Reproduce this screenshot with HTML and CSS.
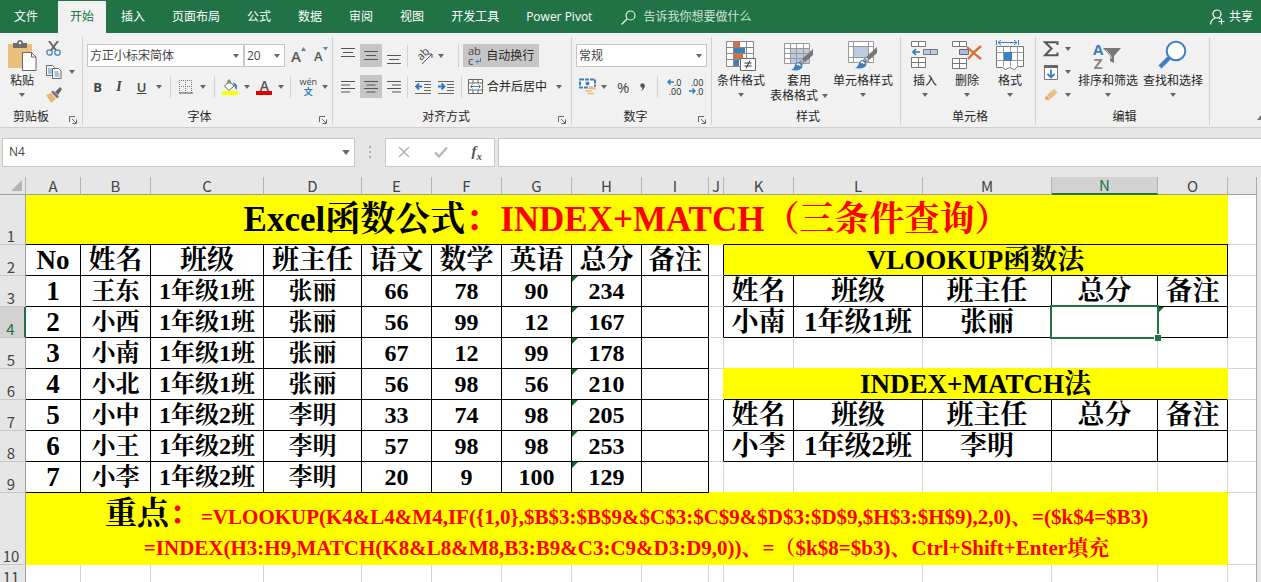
FILE: index.html
```html
<!DOCTYPE html>
<html lang="zh-CN">
<head>
<meta charset="utf-8">
<title>Excel</title>
<link rel="stylesheet" href="styles.css">
</head>
<body>
<svg class="defs" aria-hidden="true">
  <symbol id="arrow" viewBox="0 0 6 4"><path d="M0 0h6L3 4z" fill="#666"/></symbol>
  <symbol id="launch" viewBox="0 0 8 8"><path d="M.5 6V.5H6M3 3l4 4M7.500 3.500v4h-4" fill="none" stroke="#666"/></symbol>
  <symbol id="brush" viewBox="0 0 22 22"><path d="M22 0v6l-8 7-3-3z" fill="#777"/><path d="M10 10.500l3.500 3.500-2 2-3.500-3.500z" fill="#999"/><path d="M0 21c3-1 3-3 4-5 1-3 4-4 6-2s2 5-1 6.500c-3 1.500-6 1-9 .5z" fill="#3f7fbf"/><path d="M6 16c1-1.500 3-1 3 1" fill="none" stroke="#fff" stroke-width="1.500"/></symbol>
</svg>

<header class="tabs">
  <button class="tab file">文件</button>
  <button class="tab active">开始</button>
  <button class="tab">插入</button>
  <button class="tab">页面布局</button>
  <button class="tab">公式</button>
  <button class="tab">数据</button>
  <button class="tab">审阅</button>
  <button class="tab">视图</button>
  <button class="tab">开发工具</button>
  <button class="tab">Power Pivot</button>
  <button class="tab tell"><svg width="15" height="15" viewBox="0 0 15 15"><circle cx="9.500" cy="5.500" r="4.500" fill="none" stroke="#e6f0ea" stroke-width="1.200"/><path d="M6 9L.5 14.500" stroke="#e6f0ea" stroke-width="1.400"/></svg>告诉我你想要做什么</button>
  <button class="tab share"><svg width="15" height="16" viewBox="0 0 15 16" fill="none" stroke="#fff" stroke-width="1.200"><circle cx="7" cy="5" r="4"/><path d="M.6 15.500c0-4 2-5.500 4.500-6.500M9 9l1.500 1M11.500 9.500v6M8.500 12.500h6"/></svg>共享</button>
</header>

<section class="ribbon">
  <div class="group clipboard">
    <div class="tools">
      <button class="big paste"><svg width="29" height="32" viewBox="0 0 29 32"><path d="M0 4h24v24H0z" fill="#e9c07c"/><path d="M5 3h4c0-4 6-4 6 0h4v5H5z" fill="#6d6d6d"/><circle cx="12" cy="3" r="1.200" fill="#fff"/><path d="M14.500 12.500h9l4.500 4.500v13.500H14.500z" fill="#fff" stroke="#666"/><path d="M23.500 12.500V17H28" fill="none" stroke="#666"/></svg><span>粘贴</span><svg class="arrow"><use href="#arrow"/></svg></button>
      <div class="stack">
        <button class="icon" aria-label="剪切"><svg width="16" height="16" viewBox="0 0 16 16"><path d="M3 0l7.500 10M12 0L4.500 10" stroke="#666" stroke-width="2"/><circle cx="3.500" cy="11.500" r="2.700" fill="none" stroke="#4a86b8" stroke-width="1.300"/><circle cx="11.500" cy="11.500" r="2.700" fill="none" stroke="#4a86b8" stroke-width="1.300"/></svg></button>
        <button class="icon split" aria-label="复制"><svg width="16" height="16" viewBox="0 0 16 16" fill="#fff" stroke="#666"><path d="M.5 1.500h6l2 2v8h-8z"/><path d="M6.500 4.500h6l2.500 2.500v7.500H6.500z"/><path d="M2 5h4M2 7h4M2 9h4M8.500 8h4M8.500 10h5M8.500 12h5" stroke="#4a86b8"/></svg><svg class="arrow"><use href="#arrow"/></svg></button>
        <button class="icon" aria-label="格式刷"><svg width="16" height="16" viewBox="0 0 16 16"><path d="M0 8l5-2 5 6-5 4z" fill="#e9b970"/><path d="M5 5l2-1.500 6 6-2 2z" fill="#777"/><path d="M9 5l5-5 2 2-4 6z" fill="#666"/></svg></button>
      </div>
    </div>
    <div class="caption"><span>剪贴板</span><button class="launch" aria-label="剪贴板设置"><svg width="8" height="8"><use href="#launch"/></svg></button></div>
  </div>

  <div class="group font">
    <div class="tools rows">
      <div class="bar">
        <label class="combo family"><select aria-label="字体"><option>方正小标宋简体</option></select><svg class="arrow"><use href="#arrow"/></svg></label>
        <label class="combo size"><select aria-label="字号"><option>20</option></select><svg class="arrow"><use href="#arrow"/></svg></label>
        <button class="icon grow" aria-label="增大字号"><span class="glyph large">A</span><svg width="5" height="18" viewBox="0 0 5 18"><path d="M0 4l2.500-4L5 4z" fill="#4a86b8"/></svg></button>
        <button class="icon grow shrink" aria-label="减小字号"><span class="glyph">A</span><svg width="5" height="18" viewBox="0 0 5 18"><path d="M0 0h5L2.500 3.500z" fill="#4a86b8"/></svg></button>
      </div>
      <div class="bar">
        <button class="icon letter"><b>B</b></button>
        <button class="icon letter"><i>I</i></button>
        <button class="icon letter split"><u>U</u><svg class="arrow"><use href="#arrow"/></svg></button>
        <span class="rule"></span>
        <button class="icon split" aria-label="边框"><svg width="14" height="14" viewBox="0 0 14 14" fill="none" stroke="#777" stroke-dasharray="1 1"><path d="M0 .5h14M0 6.500h14M.5 0v13M6.500 0v13M12.500 0v13"/><path d="M0 13h14" stroke="#555" stroke-dasharray="none"/></svg><svg class="arrow"><use href="#arrow"/></svg></button>
        <span class="rule"></span>
        <button class="icon split bucket" aria-label="填充颜色"><svg width="16" height="16" viewBox="0 0 16 16"><path d="M2.500 7L7.500 2l4.500 5-5 4.500z" fill="#fff" stroke="#666"/><path d="M6 5V1.500Q7 0 8 1.500V5" fill="none" stroke="#666"/><path d="M11 3.500c4 1 5 4 3.500 7.500-1.500-1-1-3-2.500-4.500z" fill="#3f7fbf"/><path d="M0 12h16v4H0z" fill="#ff0"/></svg><svg class="arrow"><use href="#arrow"/></svg></button>
        <button class="icon split bucket" aria-label="字体颜色"><span class="ink">A</span><svg class="arrow"><use href="#arrow"/></svg></button>
        <span class="rule"></span>
        <button class="icon split phonetic" aria-label="拼音"><span class="pinyin"><span>wén</span><span>文</span></span><svg class="arrow"><use href="#arrow"/></svg></button>
      </div>
    </div>
    <div class="caption"><span>字体</span><button class="launch" aria-label="字体设置"><svg width="8" height="8"><use href="#launch"/></svg></button></div>
  </div>

  <div class="group align">
    <div class="tools rows">
      <div class="bar">
        <button class="icon sq" aria-label="顶端对齐"><svg width="14" height="16" viewBox="0 0 14 16" stroke="#555"><path d="M0 .5h14M2 4.500h10M0 8.500h14" /></svg></button>
        <button class="icon sq on" aria-label="垂直居中"><svg width="14" height="16" viewBox="0 0 14 16" stroke="#555"><path d="M0 3.500h14M2 7.500h10M0 11.500h14"/></svg></button>
        <button class="icon sq" aria-label="底端对齐"><svg width="14" height="16" viewBox="0 0 14 16" stroke="#555"><path d="M0 7.500h14M2 11.500h10M0 15.500h14"/></svg></button>
        <span class="rule near"></span>
        <button class="icon split orient" aria-label="方向"><svg width="20" height="20" viewBox="0 0 20 20"><text x="7" y="15" transform="rotate(-45 7 15)" class="rot">ab</text><path d="M8 18L18 8M18 8h-4M18 8v4" stroke="#555" fill="none"/></svg><svg class="arrow"><use href="#arrow"/></svg></button>
        <span class="rule wrap-rule"></span>
        <button class="icon wrap on"><span class="abc"><span>ab</span><span>c<svg width="6" height="6" viewBox="0 0 6 6"><path d="M5.500 0v3.500H1M3 1.500L1 3.500l2 2" fill="none" stroke="#3f7fbf"/></svg></span></span>自动换行</button>
      </div>
      <div class="bar">
        <button class="icon sq" aria-label="左对齐"><svg width="14" height="12" viewBox="0 0 14 12" stroke="#555"><path d="M0 .5h14M0 4h9M0 7.500h14M0 11h9"/></svg></button>
        <button class="icon sq on" aria-label="居中"><svg width="14" height="12" viewBox="0 0 14 12" stroke="#555"><path d="M0 .5h14M2.500 4h9M0 7.500h14M2.500 11h9"/></svg></button>
        <button class="icon sq" aria-label="右对齐"><svg width="14" height="12" viewBox="0 0 14 12" stroke="#555"><path d="M0 .5h14M5 4h9M0 7.500h14M5 11h9"/></svg></button>
        <span class="rule near"></span>
        <button class="icon sq" aria-label="减少缩进"><svg width="16" height="14" viewBox="0 0 16 14"><path d="M0 1.500h16M9 4.500h7M9 7.500h7M9 10.500h7M0 13.500h16" stroke="#666"/><path d="M7 6.500H1M4 3.500l-3 3 3 3" fill="none" stroke="#2f79b9" stroke-width="1.800"/></svg></button>
        <button class="icon sq" aria-label="增加缩进"><svg width="16" height="14" viewBox="0 0 16 14"><path d="M0 1.500h16M9 4.500h7M9 7.500h7M9 10.500h7M0 13.500h16" stroke="#666"/><path d="M0 6.500h6M3.500 3.500l3 3-3 3" fill="none" stroke="#2f79b9" stroke-width="1.800"/></svg></button>
        <span class="rule merge-rule"></span>
        <button class="icon merge"><svg width="15" height="15" viewBox="0 0 15 15"><path d="M.5 .5h14v14H.5zM.5 4h14M.5 11h14M5 .5V4M10 .5V4M5 11v3.500M10 11v3.500" fill="#fff" stroke="#666"/><path d="M2.500 7.500h10M4.500 5.500l-2 2 2 2M10.500 5.500l2 2-2 2" fill="none" stroke="#3f7fbf"/></svg><span>合并后居中</span><svg class="arrow"><use href="#arrow"/></svg></button>
      </div>
    </div>
    <div class="caption"><span>对齐方式</span><button class="launch" aria-label="对齐设置"><svg width="8" height="8"><use href="#launch"/></svg></button></div>
  </div>

  <div class="group number">
    <div class="tools rows">
      <div class="bar">
        <label class="combo format"><select aria-label="数字格式"><option>常规</option></select><svg class="arrow"><use href="#arrow"/></svg></label>
      </div>
      <div class="bar">
        <button class="icon split money" aria-label="货币"><svg width="17" height="17" viewBox="0 0 17 17"><path d="M1 1.500h15v8H1z" fill="#fff" stroke="#3f7fbf" stroke-width="2" stroke-dasharray="4 1"/><circle cx="8.500" cy="5.500" r="2" fill="#3f7fbf"/><path d="M9 9h8v2.500H9zM6 12h7v2H6zM8 14.500h7v2H8z" fill="#ecb56d" stroke="#f1f1f1" stroke-width=".5"/></svg><svg class="arrow"><use href="#arrow"/></svg></button>
        <button class="icon pct">%</button>
        <button class="icon comma" aria-label="千位分隔"><svg width="5" height="8" viewBox="0 0 5 8"><circle cx="2.500" cy="2.500" r="2.200" fill="#555"/><path d="M4.700 2.500C4.700 5 3.500 7 1 8c1-1.500 1.500-2.500 1.500-4z" fill="#555"/></svg></button>
        <span class="rule"></span>
        <button class="icon dec"><span><svg width="7" height="6" viewBox="0 0 7 6"><path d="M7 3H1M3.500 .5L1 3l2.500 2.500" fill="none" stroke="#2f79b9" stroke-width="1.400"/></svg>.0</span><span>.00</span></button>
        <button class="icon dec"><span>.00</span><span><svg width="7" height="6" viewBox="0 0 7 6"><path d="M0 3h6M3.500 .5L6 3 3.500 5.500" fill="none" stroke="#2f79b9" stroke-width="1.400"/></svg>.0</span></button>
      </div>
    </div>
    <div class="caption"><span>数字</span><button class="launch" aria-label="数字设置"><svg width="8" height="8"><use href="#launch"/></svg></button></div>
  </div>

  <div class="group styles">
    <div class="tools">
      <button class="big"><svg width="30" height="32" viewBox="0 0 30 32"><path d="M.5 1.500h27v25H.5z" fill="#fff"/><path d="M8 2h6v5H8zM8 14h9v5H8z" fill="#d5703c"/><path d="M8 8h11v5H8zM8 20h5v6H8z" fill="#3f7fbf"/><path d="M.5 1.500h27v25H.5zM.5 7.500h27M.5 13.500h27M.5 19.500h27M7.500 1.500v25M20.500 1.500v25" fill="none" stroke="#888"/><path d="M14.500 18.500h15v12h-15z" fill="#fff" stroke="#666"/><path d="M18.500 23h7M18.500 26h7M24 20.500l-4 8" stroke="#333"/></svg><span>条件格式</span><svg class="arrow"><use href="#arrow"/></svg></button>
      <button class="big two"><svg width="30" height="32" viewBox="0 0 30 32"><path d="M.5 3.500h25v20H.5z" fill="#fff"/><path d="M7 9h18v14H7z" fill="#bccbe0"/><path d="M.5 3.500h25v20H.5zM.5 8.500h25M.5 13.500h25M.5 18.500h25M6.500 3.500v20M12.500 3.500v20M19.500 3.500v20" fill="none" stroke="#999"/><use href="#brush" x="7" y="9" width="22" height="22"/></svg><span>套用</span><span class="line">表格格式<svg class="arrow"><use href="#arrow"/></svg></span></button>
      <button class="big"><svg width="30" height="32" viewBox="0 0 30 32"><path d="M.5 1.500h25v21H.5z" fill="#fff"/><path d="M6 7h15v10H6z" fill="#bccbe0"/><path d="M.5 1.500h25v21H.5zM.5 6.500h25M.5 17.500h25M5.500 1.500v21M20.500 1.500v21" fill="none" stroke="#999"/><use href="#brush" x="7" y="7" width="22" height="22"/></svg><span>单元格样式</span><svg class="arrow"><use href="#arrow"/></svg></button>
    </div>
    <div class="caption"><span>样式</span></div>
  </div>

  <div class="group cells">
    <div class="tools">
      <button class="big"><svg width="28" height="32" viewBox="0 0 28 32"><path d="M.5 1.500h14v5H.5zM7.500 1.500v5M.5 17.500h14v10H.5zM7.500 17.500v10M.5 22.500h14" fill="#fff" stroke="#777"/><path d="M12.500 9.500h14v5h-14zM19.500 9.500v5" fill="#bccbe0" stroke="#777"/><path d="M9 12H2M5 9l-3 3 3 3" fill="none" stroke="#2f79b9" stroke-width="1.700"/></svg><span>插入</span><svg class="arrow"><use href="#arrow"/></svg></button>
      <button class="big"><svg width="30" height="32" viewBox="0 0 30 32"><path d="M.5 1.500h14v5H.5zM7.500 1.500v5M.5 18.500h14v10H.5zM7.500 18.500v10M.5 23.500h14" fill="#fff" stroke="#777"/><path d="M7.500 9.500h9v5h-9z" fill="#a9bddb" stroke="#667"/><path d="M15 7c4 4 9 8 14 12M29 6c-5 4-9 8-13 13" fill="none" stroke="#d5703c" stroke-width="2.400"/></svg><span>删除</span><svg class="arrow"><use href="#arrow"/></svg></button>
      <button class="big"><svg width="30" height="32" viewBox="0 0 30 32"><path d="M1.500 0v5M23.500 0v5M3 2.500h19M6 0L3 2.500 6 5M19 0l3 2.500L19 5" fill="none" stroke="#3f7fbf"/><path d="M1.500 6.500h27v20l-6 0-3 3-5-2-4 2-3-2H1.500z" fill="#fff" stroke="#777"/><path d="M1.500 12.500h27M1.500 20.500h27M8.500 6.500v20M15.500 6.500v20M22.500 6.500v20" fill="none" stroke="#999"/><path d="M9 12h8v9H9z" fill="#3f7fbf"/></svg><span>格式</span><svg class="arrow"><use href="#arrow"/></svg></button>
    </div>
    <div class="caption"><span>单元格</span></div>
  </div>

  <div class="group edit">
    <div class="tools">
      <div class="stack">
        <button class="icon split" aria-label="求和"><svg width="16" height="16" viewBox="0 0 16 16"><path d="M14.500 4V1.200H2l6.500 6.300L2 14.300h12.500V11.500" fill="none" stroke="#555" stroke-width="2"/></svg><svg class="arrow"><use href="#arrow"/></svg></button>
        <button class="icon split" aria-label="填充"><svg width="16" height="16" viewBox="0 0 16 16"><path d="M1.500 1.500h13v14h-13z" fill="#fff" stroke="#777"/><path d="M1 1h14v3H1z" fill="#666"/><path d="M8 5.500v8M4.500 10L8 13.500l3.500-3.500" fill="none" stroke="#3f7fbf" stroke-width="1.800"/></svg><svg class="arrow"><use href="#arrow"/></svg></button>
        <button class="icon split" aria-label="清除"><svg width="16" height="16" viewBox="0 0 16 16"><path d="M4 8l7-6 3.500 3.500-7 6.500z" fill="#e9c07c"/><path d="M3.500 8.500L7 12l-2 1.500-3.500-1.500z" fill="#efa56b"/></svg><svg class="arrow"><use href="#arrow"/></svg></button>
      </div>
      <button class="big"><span class="sort"><span class="az"><b>A</b><b>Z</b></span><svg width="18" height="18" viewBox="0 0 18 18"><path d="M0 1h18l-7 8v7l-4-2V9z" fill="#777"/><path d="M3 3l5 6v3" fill="none" stroke="#ddd"/></svg></span><span>排序和筛选</span><svg class="arrow"><use href="#arrow"/></svg></button>
      <button class="big"><svg width="30" height="32" viewBox="0 0 30 32"><path d="M11 18L2 27" stroke="#3f7fbf" stroke-width="4.500"/><circle cx="18" cy="11" r="9.300" fill="#fff" stroke="#3f7fbf" stroke-width="2"/></svg><span>查找和选择</span><svg class="arrow"><use href="#arrow"/></svg></button>
    </div>
    <div class="caption"><span>编辑</span></div>
  </div>
  <button class="collapse" aria-label="折叠功能区"><svg width="8" height="5" viewBox="0 0 8 5"><path d="M0 5l4-5 4 5z" fill="#777"/></svg></button>
</section>

<section class="formula">
  <label class="namebox"><input aria-label="名称框" value="N4"><svg class="arrow wide"><use href="#arrow"/></svg></label>
  <span class="dots"><i></i><i></i><i></i></span>
  <div class="fx">
    <button aria-label="取消"><svg width="12" height="12" viewBox="0 0 12 12"><path d="M1 1l10 10M11 1L1 11" stroke="#b5b5b5" stroke-width="1.500"/></svg></button>
    <button aria-label="输入"><svg width="14" height="12" viewBox="0 0 14 12"><path d="M1 6.500L5 10.500 13 1.500" fill="none" stroke="#b5b5b5" stroke-width="2.200"/></svg></button>
    <button class="fn"><i>f</i><sub>x</sub></button>
  </div>
  <input class="entry" aria-label="编辑栏">
</section>

<main class="sheet">
<table class="cellsgrid">
  <colgroup><col class="c-head"><col class="c-a"><col class="c-s"><col class="c-c"><col class="c-d"><col class="c-s"><col class="c-s"><col class="c-s"><col class="c-s"><col class="c-i"><col class="c-j"><col class="c-s"><col class="c-l"><col class="c-l"><col class="c-n"><col class="c-s"><col></colgroup>
  <thead>
    <tr><th class="corner"><svg width="11" height="11" viewBox="0 0 11 11"><path d="M11 0v11H0z" fill="#b3b3b3"/></svg></th><th>A</th><th>B</th><th>C</th><th>D</th><th>E</th><th>F</th><th>G</th><th>H</th><th>I</th><th>J</th><th>K</th><th>L</th><th>M</th><th class="sel">N</th><th>O</th><th></th></tr>
  </thead>
  <tbody>
    <tr class="r1"><th>1</th><td colspan="15" class="y title">Excel函数公式<span class="red">：INDEX+MATCH（三条件查询）</span></td><td></td></tr>
    <tr class="r2"><th>2</th><td class="k h">No</td><td class="k h">姓名</td><td class="k h">班级</td><td class="k h">班主任</td><td class="k h">语文</td><td class="k h">数学</td><td class="k h">英语</td><td class="k h">总分</td><td class="k h">备注</td><td class="edge ytop"></td><td colspan="5" class="k y h">VLOOKUP函数法</td><td class="gtop"></td></tr>
    <tr><th>3</th><td class="k h">1</td><td class="k">王东</td><td class="k">1年级1班</td><td class="k">张丽</td><td class="k">66</td><td class="k">78</td><td class="k">90</td><td class="k flag">234</td><td class="k"></td><td class="edge"></td><td class="k h">姓名</td><td class="k h">班级</td><td class="k h">班主任</td><td class="k h">总分</td><td class="k h">备注</td><td></td></tr>
    <tr><th class="sel">4</th><td class="k h">2</td><td class="k">小西</td><td class="k">1年级1班</td><td class="k">张丽</td><td class="k">56</td><td class="k">99</td><td class="k">12</td><td class="k flag">167</td><td class="k"></td><td class="edge"></td><td class="k h">小南</td><td class="k h">1年级1班</td><td class="k h">张丽</td><td class="k cursor"></td><td class="k flag"></td><td></td></tr>
    <tr><th>5</th><td class="k h">3</td><td class="k">小南</td><td class="k">1年级1班</td><td class="k">张丽</td><td class="k">67</td><td class="k">12</td><td class="k">99</td><td class="k flag">178</td><td class="k"></td><td></td><td class="ybot"></td><td class="ybot"></td><td class="ybot"></td><td class="ybot"></td><td class="ybot"></td><td></td></tr>
    <tr><th>6</th><td class="k h">4</td><td class="k">小北</td><td class="k">1年级1班</td><td class="k">张丽</td><td class="k">56</td><td class="k">98</td><td class="k">56</td><td class="k flag">210</td><td class="k"></td><td class="yedge"></td><td colspan="5" class="k y h open">INDEX+MATCH法</td><td></td></tr>
    <tr><th>7</th><td class="k h">5</td><td class="k">小中</td><td class="k">1年级2班</td><td class="k">李明</td><td class="k">33</td><td class="k">74</td><td class="k">98</td><td class="k flag">205</td><td class="k"></td><td class="edge"></td><td class="k h">姓名</td><td class="k h">班级</td><td class="k h">班主任</td><td class="k h">总分</td><td class="k h">备注</td><td></td></tr>
    <tr><th>8</th><td class="k h">6</td><td class="k">小王</td><td class="k">1年级2班</td><td class="k">李明</td><td class="k">57</td><td class="k">98</td><td class="k">98</td><td class="k flag">253</td><td class="k"></td><td class="edge"></td><td class="k h">小李</td><td class="k h">1年级2班</td><td class="k h">李明</td><td class="k"></td><td class="k"></td><td></td></tr>
    <tr><th>9</th><td class="k h">7</td><td class="k">小李</td><td class="k">1年级2班</td><td class="k">李明</td><td class="k">20</td><td class="k">9</td><td class="k">100</td><td class="k flag">129</td><td class="k"></td><td class="ybot"></td><td class="ybot"></td><td class="ybot"></td><td class="ybot"></td><td class="ybot"></td><td class="ybot"></td><td></td></tr>
    <tr class="r10"><th>10</th><td colspan="15" class="y note"><div><span class="key">重点</span><span class="key red">：</span><span class="red">=VLOOKUP(K4&amp;L4&amp;M4,IF({1,0},$B$3:$B$9&amp;$C$3:$C$9&amp;$D$3:$D$9,$H$3:$H$9),2,0)、=($k$4=$B3)</span></div><div class="red">=INDEX(H3:H9,MATCH(K8&amp;L8&amp;M8,B3:B9&amp;C3:C9&amp;D3:D9,0))、=（$k$8=$b3)、Ctrl+Shift+Enter填充</div></td><td></td></tr>
    <tr class="r11"><th>11</th><td></td><td></td><td></td><td></td><td></td><td></td><td></td><td></td><td></td><td></td><td></td><td></td><td></td><td></td><td></td><td></td></tr>
  </tbody>
</table>
<div class="scroll"></div>
</main>
</body>
</html>
```
FILE: styles.css
```css
* { box-sizing: border-box; }
body {
  margin: 0;
  height: 100vh;
  display: flex;
  flex-direction: column;
  overflow: hidden;
  background: #e6e6e6;
  color: #262626;
  font: 12px/16px "Open Sans", "Noto Sans CJK SC", sans-serif;
}
button, input, select { font: inherit; color: inherit; }
button { background: none; border: 0; padding: 0; white-space: nowrap; }
svg { display: block; flex: none; }
.defs { position: absolute; width: 0; height: 0; }
.arrow { width: 6px; height: 4px; }
.arrow.wide { width: 8px; height: 5px; }

/* Tab strip */
.tabs { flex: none; display: flex; gap: 1px; height: 33px; padding-top: 1px; background: #217346; }
.tab { padding: 0 13px; color: #fff; display: flex; align-items: center; }
.tab.file { padding: 0 19px 0 14px; }
.tab.active { padding: 0 12px; margin-right: 1px; background: #f1f1f1; color: #217346; }
.tab.tell { gap: 7px; padding-left: 15px; color: #cfe3d7; }
.tab.share { gap: 4px; margin-left: auto; padding: 0 8px; }

/* Ribbon */
.ribbon { flex: none; display: flex; height: 95px; padding: 4px 0 2px; background: #f1f1f1; border-bottom: 1px solid #cfcfcf; }
.group { flex: none; display: flex; flex-direction: column; justify-content: space-between; border-right: 1px solid #d2d2d2; padding-left: 4px; }
.clipboard { width: 83px; }
.font { width: 250px; }
.align { width: 239px; }
.number { width: 140px; }
.styles { width: 189px; }
.cells { width: 135px; }
.edit { width: 174px; }
.tools { display: flex; }
.caption { display: flex; align-items: center; height: 16px; }
.caption span { flex: 1; text-align: center; }
.clipboard .caption span { padding-right: 8px; }
.font .caption span { padding-right: 4px; }
.launch { width: 16px; height: 16px; padding: 6px 3px 0; }
.rows { flex-direction: column; gap: 8px; padding-top: 7px; }
.bar { display: flex; align-items: center; height: 23px; }
.rule { width: 1px; height: 22px; background: #d2d2d2; margin: 0 4px; }
.rule.near { margin: 0 4px 0 2px; }
.wrap-rule { margin: 0 4px 0 12px; }
.merge-rule { margin: 0 6px 0 4px; }
.icon { display: flex; align-items: center; justify-content: center; height: 23px; padding: 0 4px; }
.split { gap: 7px; }
.sq { width: 22px; padding: 0; }
.sq + .sq { margin-left: 1px; }
.on { background: #c6c6c6; }
.stack { display: flex; flex-direction: column; align-items: flex-start; }
.clipboard .stack { padding-left: 2px; }
.big { display: flex; flex-direction: column; align-items: center; padding-top: 3px; }
.big > span { margin-top: 1px; }
.big > .sort { margin-top: 0; }
.big .arrow { margin-top: 4px; }
.big .line { display: flex; align-items: center; gap: 4px; height: 14px; margin-top: 0; }
.big .line .arrow { margin: 0; }
.paste { width: 36px; }
.combo, .namebox { display: grid; align-items: center; background: #fff; border: 1px solid #c6c6c6; height: 23px; }
.combo > *, .namebox > * { grid-area: 1 / 1; }
.combo .arrow, .namebox .arrow { justify-self: end; margin-right: 4px; }
.combo select { appearance: none; border: 0; background: none; width: 100%; padding: 0 2px; outline: 0; color: #444; }
.family { width: 157px; }
.size { width: 41px; }
.format { width: 131px; }
.grow { gap: 0; padding: 0 0 0 6px; }
.shrink { padding-left: 8px; }
.glyph { font-weight: 600; font-size: 13px; color: #555; }
.glyph.large { font-size: 15px; }
.letter { width: 22px; color: #444; font-size: 13px; }
.letter.split { width: 34px; gap: 9px; font-weight: 600; padding: 0 0 0 6px; margin-right: 3px; }
.letter i { font-family: "Liberation Serif", serif; font-weight: bold; font-size: 14px; }
.bucket { padding: 0 2px 0 4px; gap: 6px; }
.ink { width: 16px; height: 16px; border-bottom: 4px solid #e60000; font-size: 14px; line-height: 13px; font-weight: 600; color: #555; }
.phonetic { gap: 5px; }
.pinyin { display: flex; flex-direction: column; font-size: 9px; line-height: 10px; color: #444; }
.pinyin span + span { color: #2f79b9; font-weight: bold; }
.rot { font-size: 11px; fill: #444; }
.orient { gap: 4px; padding: 0 2px; }
.wrap { gap: 5px; padding: 0 5px; }
.abc { display: flex; flex-direction: column; font-size: 11px; line-height: 10px; color: #444; align-items: flex-start; }
.abc span { display: flex; align-items: center; gap: 2px; }
.merge { gap: 4px; padding: 0; }
.merge .arrow { margin-left: 5px; }
.money { padding: 0 4px 0 3px; gap: 5px; }
.pct { font-size: 15px; color: #444; padding: 0 6px; }
.comma { padding: 0 8px 0 5px; }
.dec { flex-direction: column; align-items: flex-end; font-size: 9px; line-height: 9px; width: 22px; padding: 0 3px; }
.dec span { display: flex; align-items: center; }
.cells .tools { padding-left: 6px; gap: 13px; }
.styles .tools { padding-left: 1px; gap: 5px; }
.edit .stack .icon { padding: 0 3px 0 3px; gap: 6px; }
.edit .tools { gap: 5px; }
.edit .stack + .big { margin-left: -1px; }
.sort { display: flex; align-items: center; width: 30px; height: 32px; }
.az { display: flex; flex-direction: column; font-size: 15px; line-height: 14px; color: #3f7fbf; }
.az b + b { color: #888; }
.collapse { margin: 0 -4px 5px auto; align-self: flex-end; }

/* Formula bar */
.formula { flex: none; display: flex; align-items: center; height: 49px; padding: 0 0 1px 2px; }
.namebox { width: 353px; height: 29px; }
.namebox input { border: 0; background: none; width: 100%; padding: 0 6px; outline: 0; color: #444; }
.dots { width: 30px; display: flex; flex-direction: column; align-items: center; gap: 3px; }
.dots i { width: 2px; height: 2px; background: #aaa; }
.fx { display: flex; justify-content: space-around; width: 110px; height: 29px; background: #fff; border: 1px solid #c6c6c6; margin-right: 3px; }
.fn { font: bold 15px "Liberation Serif", serif; color: #555; }
.fn sub { font-size: 11px; font-style: italic; }
.entry { flex: 1; min-width: 0; height: 29px; border: 1px solid #c6c6c6; border-right: 0; background: #fff; outline: 0; }

/* Worksheet */
.sheet { flex: 1; min-height: 0; display: flex; overflow: hidden; }
.scroll { flex: none; width: 5px; border-left: 1px solid #aaa; }
.cellsgrid { flex: 1; table-layout: fixed; width: 0; border-collapse: separate; border-spacing: 0; }
.c-head { width: 26px; }
.c-a { width: 55px; }
.c-s { width: 70px; }
.c-c { width: 113px; }
.c-d { width: 98px; }
.c-i { width: 67px; }
.c-j { width: 15px; }
.c-l { width: 129px; }
.c-n { width: 106px; }
th { padding: 0; font: 15px/17px "Noto Sans CJK SC", sans-serif; color: #444; background: #e6e6e6; }
thead th { height: 18px; border-right: 1px solid #b5b5b5; border-bottom: 1px solid #9e9e9e; }
thead th:last-child { border-right: 0; }
thead th.sel { background: #d2d2d2; color: #217346; border-bottom: 2px solid #217346; line-height: 16px; }
.corner svg { margin: 0 3px 0 auto; }
tbody th { vertical-align: bottom; border-right: 1px solid #9e9e9e; border-bottom: 1px solid #c6c6c6; padding-right: 3px; }
tbody th.sel { background: #d2d2d2; color: #217346; border-right: 2px solid #217346; }
td {
  position: relative;
  height: 31px;
  padding: 1px 0 0;
  background: #fff;
  border-right: 1px solid #d4d4d4;
  border-bottom: 1px solid #d4d4d4;
  color: #000;
  text-align: center;
  white-space: nowrap;
  font: bold 24px/29px "Liberation Serif", "Noto Serif CJK SC", "Noto Sans CJK SC", serif;
}
td:last-child { border-right: 0; }
.k { border-right-color: #000; border-bottom-color: #000; }
.h { font-size: 27px; }
.y { background: #ff0; }
.red { color: #f00; }
.edge { border-right-color: #000; }
.yedge { border-right-color: #ff0; }
.ybot { border-bottom-color: #ff0; }
.open { border-right-color: #ff0; }
.r1 td { height: 49px; border-bottom: 0; }
.r1 th { border-bottom: 0; }
.r1 .title { font-size: 35px; line-height: 46px; border-right-color: #ff0; }
.r2 td { height: 32px; border-top: 1px solid #000; }
.r2 th { border-top: 1px solid #c6c6c6; }
.r2 .ytop { border-top-color: #ff0; }
.r2 .gtop { border-top-color: #d4d4d4; }
.r10 td { height: 72px; }
.r10 .note { border-color: #ff0; font-size: 21px; line-height: 31px; vertical-align: top; padding-top: 5px; }
.note .key { font-size: 32px; }
.r11 td { height: 21px; }
.flag::before {
  content: "";
  position: absolute;
  left: 0;
  top: 0;
  border-top: 6px solid #0b6623;
  border-right: 6px solid transparent;
}
.cursor::before {
  content: "";
  position: absolute;
  z-index: 1;
  inset: -2px;
  border: 2px solid #217346;
}
.cursor::after {
  content: "";
  position: absolute;
  z-index: 2;
  right: -4px;
  bottom: -4px;
  width: 6px;
  height: 6px;
  background: #217346;
  border: 1px solid #fff;
  border-width: 1px 0 0 1px;
}
```
